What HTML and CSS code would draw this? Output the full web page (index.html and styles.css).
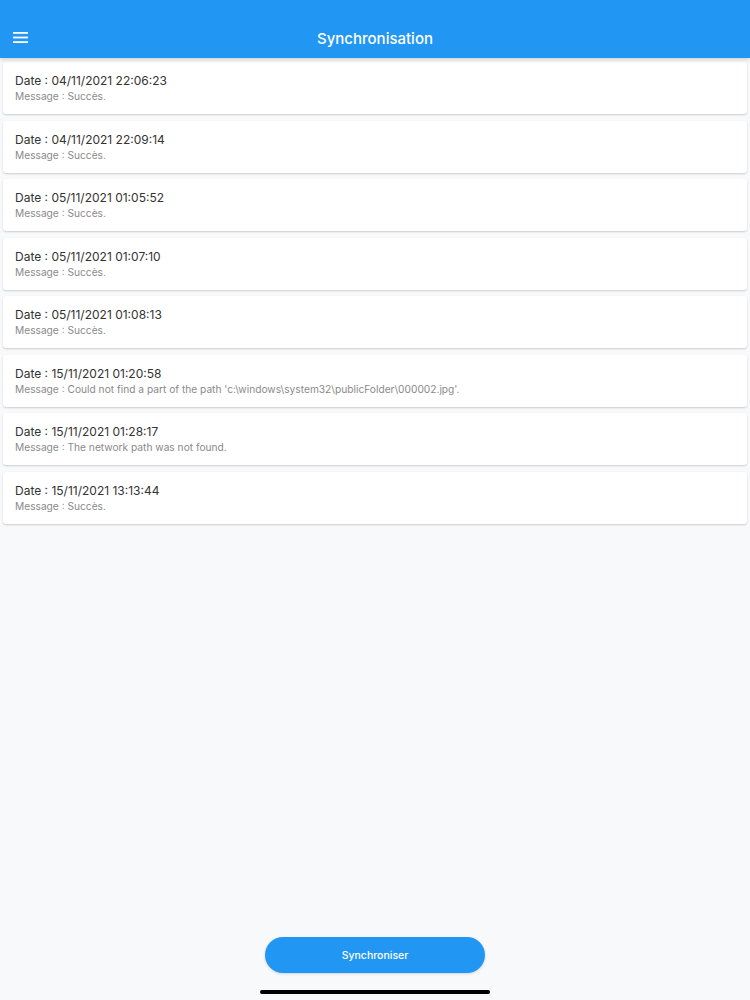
FILE: index.html
```html
<!DOCTYPE html>
<html lang="fr">
<head>
    <meta charset="UTF-8">
    <meta name="viewport" content="width=device-width, initial-scale=1.0">
    <title>Synchronisation</title>
    <link rel="stylesheet" href="styles.css">
</head>
<body>
    <div class="app">
        <header class="toolbar">
            <button class="menu-btn" aria-label="Menu">
                <svg width="16" height="11" viewBox="0 0 16 11">
                    <rect x="0" y="0" width="15" height="1.8" fill="#fff"/>
                    <rect x="0" y="4.6" width="15" height="1.8" fill="#fff"/>
                    <rect x="0" y="9.2" width="15" height="1.8" fill="#fff"/>
                </svg>
            </button>
            <h1 class="title">Synchronisation</h1>
        </header>

        <main class="log-list">
            <div class="log-item">
                <p class="log-date">Date : 04/11/2021 22:06:23</p>
                <p class="log-msg">Message : Succès.</p>
            </div>
            <div class="log-item">
                <p class="log-date">Date : 04/11/2021 22:09:14</p>
                <p class="log-msg">Message : Succès.</p>
            </div>
            <div class="log-item">
                <p class="log-date">Date : 05/11/2021 01:05:52</p>
                <p class="log-msg">Message : Succès.</p>
            </div>
            <div class="log-item">
                <p class="log-date">Date : 05/11/2021 01:07:10</p>
                <p class="log-msg">Message : Succès.</p>
            </div>
            <div class="log-item">
                <p class="log-date">Date : 05/11/2021 01:08:13</p>
                <p class="log-msg">Message : Succès.</p>
            </div>
            <div class="log-item">
                <p class="log-date">Date : 15/11/2021 01:20:58</p>
                <p class="log-msg">Message : Could not find a part of the path 'c:\windows\system32\publicFolder\000002.jpg'.</p>
            </div>
            <div class="log-item">
                <p class="log-date">Date : 15/11/2021 01:28:17</p>
                <p class="log-msg">Message : The network path was not found.</p>
            </div>
            <div class="log-item">
                <p class="log-date">Date : 15/11/2021 13:13:44</p>
                <p class="log-msg">Message : Succès.</p>
            </div>
        </main>

        <footer class="bottom">
            <button class="sync-btn">Synchroniser</button>
            <div class="home-bar"></div>
        </footer>
    </div>
</body>
</html>
```

FILE: styles.css
```css
body {
    margin: 0;
    font-family: Inter, "Noto Sans", Arial, sans-serif;
    background-color: #f8f9fb;
}

.app {
    display: flex;
    flex-direction: column;
    height: 1000px;
}

.toolbar {
    background-color: #2196f3;
    height: 58px;
    display: flex;
    align-items: flex-end;
    justify-content: center;
    position: relative;
    box-shadow: 0 2px 4px rgba(0, 0, 0, 0.15);
}

.menu-btn {
    position: absolute;
    left: 13px;
    bottom: 15px;
    background: none;
    border: none;
    padding: 0;
    display: flex;
}

.title {
    margin: 0 0 10px;
    color: #fff;
    font-size: 15px;
    font-weight: 500;
}

.log-list {
    display: flex;
    flex-direction: column;
    gap: 6.5px;
    padding: 4px 3px 0;
}

.log-item {
    background: #fff;
    border-radius: 3px;
    box-shadow: 0 1px 2px rgba(0, 0, 0, 0.18);
    height: 52px;
    padding: 11px 12px 0;
    box-sizing: border-box;
}

.log-date {
    margin: 0;
    font-size: 12px;
    color: #333;
    line-height: 16px;
}

.log-msg {
    margin: 0;
    font-size: 10.2px;
    color: #8a8a8a;
    line-height: 14px;
}

.bottom {
    margin-top: auto;
    display: flex;
    flex-direction: column;
    align-items: center;
}

.sync-btn {
    width: 220px;
    height: 36px;
    border: none;
    border-radius: 18px;
    background-color: #2196f3;
    color: #fff;
    font-family: inherit;
    font-size: 10.5px;
    font-weight: 500;
    box-shadow: 0 1px 3px rgba(0, 0, 0, 0.15);
}

.home-bar {
    width: 230px;
    height: 4px;
    border-radius: 2px;
    background: #000;
    margin: 17px 0 6px;
}
```
